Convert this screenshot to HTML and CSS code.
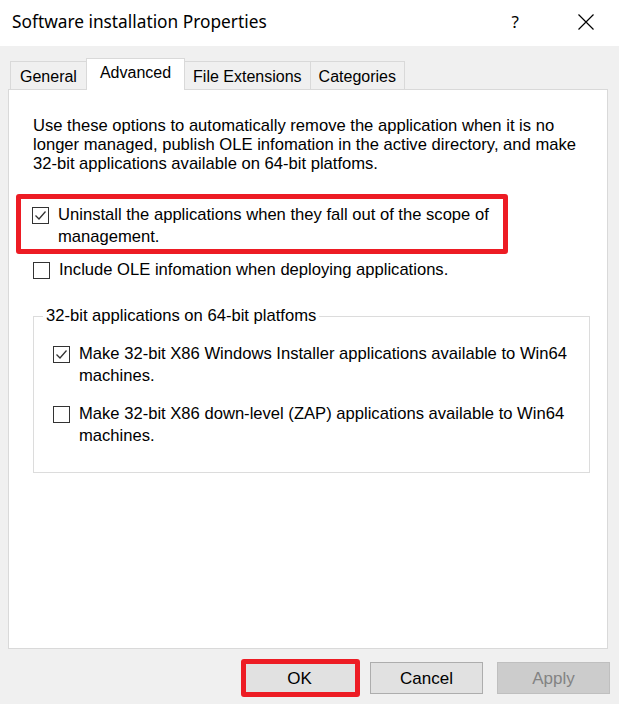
FILE: index.html
```html
<!DOCTYPE html>
<html lang="en">
<head>
<meta charset="utf-8">
<title>Software installation Properties</title>
<link rel="stylesheet" href="styles.css">
</head>
<body>
<div class="titlebar">
  <span class="title">Software installation Properties</span>
  <span class="help">?</span>
  <svg class="close" width="16" height="16" viewBox="0 0 16 16"><path d="M0.5 0.5L15.5 15.5M15.5 0.5L0.5 15.5"/></svg>
</div>
<div class="tabs">
  <div class="tab">General</div>
  <div class="tab active">Advanced</div>
  <div class="tab">File Extensions</div>
  <div class="tab">Categories</div>
</div>
<div class="panel">
  <p class="desc">Use these options to automatically remove the application when it is no<br>longer managed, publish OLE infomation in the active directory, and make<br>32-bit applications available on 64-bit platfoms.</p>
  <div class="highlight">
    <div class="check">
      <span class="box"><svg viewBox="0 0 15 15"><path d="M2.5 7.5L6 11L12.5 3.5"/></svg></span>
      <span class="lbl">Uninstall the applications when they fall out of the scope of<br>management.</span>
    </div>
  </div>
  <div class="check row2">
    <span class="box"></span>
    <span class="lbl">Include OLE infomation when deploying applications.</span>
  </div>
  <fieldset class="group">
    <legend>32-bit applications on 64-bit platfoms</legend>
    <div class="check">
      <span class="box"><svg viewBox="0 0 15 15"><path d="M2.5 7.5L6 11L12.5 3.5"/></svg></span>
      <span class="lbl">Make 32-bit X86 Windows Installer applications available to Win64<br>machines.</span>
    </div>
    <div class="check row4">
      <span class="box"></span>
      <span class="lbl">Make 32-bit X86 down-level (ZAP) applications available to Win64<br>machines.</span>
    </div>
  </fieldset>
</div>
<div class="buttons">
  <button class="btn default">OK</button>
  <button class="btn">Cancel</button>
  <button class="btn disabled">Apply</button>
</div>
</body>
</html>
```

FILE: styles.css
```css
html, body {
  margin: 0;
  padding: 0;
}
body {
  width: 619px;
  height: 704px;
  overflow: hidden;
  background: #f0f0f0;
  font-family: "Liberation Sans", Arial, sans-serif;
  font-size: 16px;
  color: #000;
}
.titlebar {
  height: 46px;
  box-sizing: border-box;
  background: #fff;
  display: flex;
  align-items: center;
  padding: 0 25px 3px 12px;
}
.title {
  flex: 1;
  font-family: "Noto Sans", sans-serif;
  font-size: 17.3px;
  color: #000;
}
.help {
  font-family: "Noto Sans", sans-serif;
  font-size: 17px;
  margin-right: 59px;
}
.close {
  display: block;
  margin-top: 1px;
}
.close path {
  stroke: #000;
  stroke-width: 1.2;
  fill: none;
}
.tabs {
  display: flex;
  align-items: flex-end;
  height: 31px;
  margin-top: 12px;
  padding-left: 10px;
}
.tab {
  box-sizing: border-box;
  height: 28px;
  padding: 2px 8px 0;
  margin-left: -1px;
  border: 1px solid #d9d9d9;
  border-bottom: none;
  background: #f0f0f0;
  display: flex;
  align-items: center;
  white-space: nowrap;
}
.tab:first-child {
  margin-left: 0;
  padding: 2px 9px 0;
}
.tab.active {
  position: relative;
  z-index: 1;
  height: 32px;
  margin-bottom: -1px;
  padding: 0 13px 4px;
  background: #fff;
}
.panel {
  box-sizing: border-box;
  height: 560px;
  margin: 0 11px 0 8px;
  padding: 26px 17px 0 24px;
  background: #fff;
  border: 1px solid #d9d9d9;
  font-size: 16.6px;
}
.desc {
  margin: 0;
  line-height: 19px;
  white-space: nowrap;
}
.highlight {
  box-sizing: border-box;
  width: 492px;
  margin: 21px 0 0 -17px;
  padding: 5px 0 1px 11px;
  border: 5px solid #ed1c24;
  border-radius: 3px;
}
.check {
  display: flex;
  align-items: flex-start;
  line-height: 22px;
  white-space: nowrap;
}
.box {
  flex: none;
  box-sizing: border-box;
  width: 17px;
  height: 17px;
  margin: 3px 9px 0 0;
  border: 1px solid #333;
  background: #fff;
}
.box svg {
  display: block;
  width: 15px;
  height: 15px;
}
.box path {
  fill: none;
  stroke: #333;
  stroke-width: 1.3;
}
.row2 {
  margin-top: 5px;
}
.group {
  box-sizing: border-box;
  width: 557px;
  min-width: 0;
  margin: 25px 0 0;
  padding: 17px 0 25px 9px;
  border: 1px solid #dcdcdc;
}
.group legend {
  padding: 0 3px;
  line-height: 20px;
}
.group .check {
  margin-left: 10px;
}
.row4 {
  margin-top: 16px;
}
.buttons {
  display: flex;
  justify-content: flex-end;
  gap: 14px;
  margin-top: 13px;
  padding-right: 9px;
}
.btn {
  box-sizing: border-box;
  width: 113px;
  height: 32px;
  padding: 2px 0 0;
  border: 1px solid #adadad;
  border-radius: 0;
  background: #e1e1e1;
  font-family: "Liberation Sans", Arial, sans-serif;
  font-size: 17px;
  color: #000;
}
.btn.disabled {
  background: #cccccc;
  border-color: #bfbfbf;
  color: #838383;
}
.btn.default {
  position: relative;
}
.btn.default::after {
  content: "";
  position: absolute;
  top: -4px;
  left: -3px;
  right: -5px;
  bottom: -4px;
  border: 5px solid #ed1c24;
  border-radius: 3px;
}
```
